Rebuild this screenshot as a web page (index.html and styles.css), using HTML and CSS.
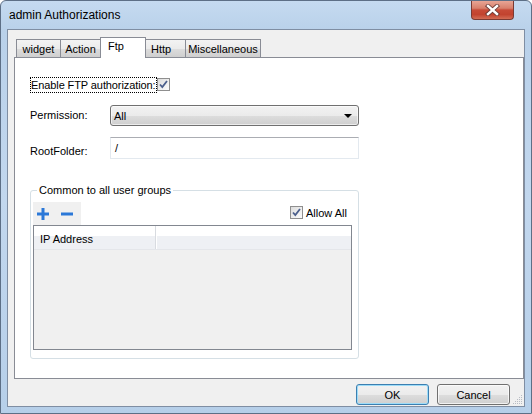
FILE: index.html
```html
<!DOCTYPE html>
<html>
<head>
<meta charset="utf-8">
<title>admin Authorizations</title>
<link rel="stylesheet" href="styles.css">
</head>
<body>
<div class="window">
  <div class="titlebar">
    <span class="title">admin Authorizations</span>
    <div class="close">
      <svg width="17" height="12" viewBox="0 0 17 12">
        <path d="M4 2 L13 10 M13 2 L4 10" stroke="#6a3a36" stroke-width="4.2" stroke-linecap="square" fill="none"/>
        <path d="M4 2 L13 10 M13 2 L4 10" stroke="#ffffff" stroke-width="2.4" stroke-linecap="square" fill="none"/>
      </svg>
    </div>
  </div>
  <div class="client">
    <div class="tabs">
      <div class="tab t-widget">widget</div>
      <div class="tab t-action">Action</div>
      <div class="tab t-ftp active">Ftp</div>
      <div class="tab t-http">Http</div>
      <div class="tab t-misc">Miscellaneous</div>
    </div>
    <div class="panel">
      <div class="enable">
        <span class="focus">Enable FTP authorization:</span>
        <span class="check">
          <svg width="13" height="13" viewBox="0 0 13 13"><path d="M3 6.5 L5.3 9 L10 3" stroke="#4b5f8c" stroke-width="1.8" fill="none"/></svg>
        </span>
      </div>
      <div class="form">
        <span class="lbl">Permission:</span>
        <div class="select"><span>All</span>
          <svg width="8" height="4" viewBox="0 0 8 4"><path d="M0 0 H8 L4 4 Z" fill="#000"/></svg>
        </div>
        <span class="lbl lbl-low">RootFolder:</span>
        <div class="input">/</div>
      </div>
      <fieldset class="group">
        <legend>Common to all user groups</legend>
        <div class="toolrow">
          <div class="toolbar">
            <svg class="ic" width="14" height="14" viewBox="0 0 14 14"><path d="M7 1 V13 M1 7 H13" stroke="#2b78d8" stroke-width="3" fill="none"/></svg>
            <svg class="ic" width="14" height="14" viewBox="0 0 14 14"><path d="M1 7 H13" stroke="#2b78d8" stroke-width="3" fill="none"/></svg>
          </div>
          <div class="allow">
            <span class="check">
              <svg width="13" height="13" viewBox="0 0 13 13"><path d="M3 6.5 L5.3 9 L10 3" stroke="#4b5f8c" stroke-width="1.8" fill="none"/></svg>
            </span>
            <span>Allow All</span>
          </div>
        </div>
        <div class="table">
          <div class="thead">
            <div class="th c1">IP Address</div>
            <div class="th c2"></div>
          </div>
          <div class="tbody"></div>
        </div>
      </fieldset>
    </div>
    <div class="buttons">
      <button class="btn default">OK</button>
      <button class="btn">Cancel</button>
    </div>
    <svg class="grip" width="11" height="11" viewBox="0 0 11 11">
      <g fill="#b8bcc4">
        <rect x="9" y="1" width="1" height="1"/><rect x="7" y="3" width="1" height="1"/><rect x="9" y="3" width="1" height="1"/>
        <rect x="5" y="5" width="1" height="1"/><rect x="7" y="5" width="1" height="1"/><rect x="9" y="5" width="1" height="1"/>
        <rect x="3" y="7" width="1" height="1"/><rect x="5" y="7" width="1" height="1"/><rect x="7" y="7" width="1" height="1"/><rect x="9" y="7" width="1" height="1"/>
        <rect x="1" y="9" width="1" height="1"/><rect x="3" y="9" width="1" height="1"/><rect x="5" y="9" width="1" height="1"/><rect x="7" y="9" width="1" height="1"/><rect x="9" y="9" width="1" height="1"/>
      </g>
    </svg>
  </div>
</div>
</body>
</html>
```
FILE: styles.css
```css
* { box-sizing: border-box; }
html, body { margin: 0; padding: 0; background: #ffffff; }
body { font-family: "Liberation Sans", Arial, sans-serif; font-size: 11px; color: #000; }

.window {
  width: 532px;
  height: 414px;
  border: 1px solid #5d6f86;
  border-radius: 6px 6px 0 0;
  padding: 0 6px 6px 6px;
  background: linear-gradient(180deg, #c5daf0 0px, #b9d1ea 30px, #c2d7ee 200px, #b6cfe9 414px);
  position: relative;
}

.titlebar {
  height: 28px;
  display: flex;
  align-items: flex-start;
  justify-content: space-between;
}
.title {
  font-size: 12px;
  margin: 7px 0 0 2px;
  color: #000;
}
.close {
  width: 43px;
  height: 19px;
  margin-right: 11px;
  border: 1px solid #7a3a33;
  border-top: none;
  border-radius: 0 0 4px 4px;
  background: linear-gradient(180deg, #e8a595 0%, #d8806c 40%, #c74a37 50%, #c2432f 75%, #d36c55 100%);
  display: flex;
  align-items: center;
  justify-content: center;
}

.client {
  height: 378px;
  border: 1px solid #7f8ea3;
  background: #f0f0f0;
  display: flex;
  flex-direction: column;
  position: relative;
}

.tabs {
  display: flex;
  align-items: flex-end;
  margin: 7px 0 0 8px;
  height: 20px;
  position: relative;
  z-index: 1;
}
.tab {
  height: 18px;
  border: 1px solid #898c95;
  border-bottom: none;
  background: linear-gradient(180deg, #f3f3f3 0%, #ebebeb 50%, #dddddd 51%, #cfcfcf 100%);
  font-size: 11px;
  line-height: 17px;
  text-align: center;
  margin-right: -1px;
  padding-top: 1px;
}
.t-widget { width: 45px; }
.t-action { width: 41px; }
.t-ftp { width: 46px; }
.t-http { width: 41px; text-align: left; padding-left: 5px; }
.t-misc { width: 76px; }
.tab.active {
  height: 21px;
  margin-bottom: -1px;
  background: #ffffff;
  text-align: left;
  padding: 0 0 0 7px;
  line-height: 17px;
  position: relative;
  z-index: 2;
}

.panel {
  margin-left: 6px;
  height: 322px;
  border: 1px solid #898c95;
  background: #ffffff;
  padding: 20px 0 0 16px;
}

.enable {
  display: flex;
  align-items: flex-start;
  height: 14px;
}
.focus {
  outline: 1px dotted #000;
  outline-offset: 0;
  height: 14px;
  line-height: 14px;
  padding: 0 1px 0 0;
  margin-right: 1px;
  letter-spacing: -0.1px;
}
.check {
  width: 13px;
  height: 13px;
  border: 1px solid #8f8f8f;
  background: linear-gradient(135deg, #dcdcdc 0%, #f0f0f0 60%, #fbfbfb 100%);
  display: inline-flex;
  align-items: center;
  justify-content: center;
  flex: none;
}
.check svg { display: block; margin: -1px; }

.form {
  display: grid;
  grid-template-columns: 80px 249px;
  row-gap: 11px;
  margin: 13px 0 0 -1px;
  align-items: center;
}
.lbl { line-height: 21px; height: 21px; }
.lbl-low { line-height: 27px; }
.select {
  height: 21px;
  border: 1px solid #707070;
  border-radius: 3px;
  background: linear-gradient(180deg, #f2f2f2 0%, #ebebeb 50%, #dddddd 51%, #cfcfcf 100%);
  display: flex;
  align-items: center;
  justify-content: space-between;
  padding: 0 6px 0 3px;
  box-shadow: inset 0 0 0 1px rgba(255,255,255,0.6);
}
.input {
  height: 22px;
  border: 1px solid #e3e9ef;
  border-top-color: #abadb3;
  background: #ffffff;
  line-height: 20px;
  padding-left: 4px;
}

.group {
  margin: 25px 0 0 -1px;
  width: 329px;
  height: 175px;
  border: 1px solid #d5dfe5;
  border-radius: 3px;
  padding: 5px 6px 6px 2px;
  min-width: 0;
}
.group legend {
  padding: 0 2px;
  margin-left: 4px;
  font-size: 11px;
  line-height: 13px;
}

.toolrow {
  display: flex;
  justify-content: space-between;
  align-items: flex-start;
  height: 23px;
}
.toolbar {
  width: 48px;
  height: 23px;
  background: #f0f0f0;
  display: flex;
  align-items: center;
  gap: 10px;
  padding: 1px 0 0 3px;
}
.ic { display: block; }
.allow {
  display: flex;
  align-items: center;
  gap: 3px;
  margin-top: 4px;
  margin-right: 5px;
}

.table {
  height: 125px;
  border: 1px solid #828790;
  background: #f0f0f0;
}
.thead {
  display: flex;
  height: 24px;
  background: linear-gradient(180deg, #ffffff 0%, #ffffff 42%, #eef0f4 43%, #eef0f4 100%);
  border-bottom: 1px solid #e4e6ea;
}
.th {
  line-height: 20px;
  padding: 3px 0 0 6px;
}
.th.c1 {
  width: 122px;
  border-right: 1px solid #d8dbe0;
  box-shadow: 1px 0 0 #ffffff;
}
.th.c2 { flex: 1; }

.buttons {
  display: flex;
  justify-content: flex-end;
  gap: 8px;
  margin: 5px 14px 0 0;
}
.btn {
  width: 73px;
  height: 21px;
  border: 1px solid #707070;
  border-radius: 3px;
  background: linear-gradient(180deg, #f2f2f2 0%, #ebebeb 50%, #dddddd 51%, #cfcfcf 100%);
  font-family: "Liberation Sans", Arial, sans-serif;
  font-size: 11px;
  color: #000;
  padding: 0;
  box-shadow: inset 0 0 0 1px rgba(255,255,255,0.7);
}
.btn.default {
  border-color: #3c7fb1;
  box-shadow: inset 0 0 0 1px #9ddcf8;
}

.grip {
  position: absolute;
  right: 1px;
  bottom: 1px;
}
```
